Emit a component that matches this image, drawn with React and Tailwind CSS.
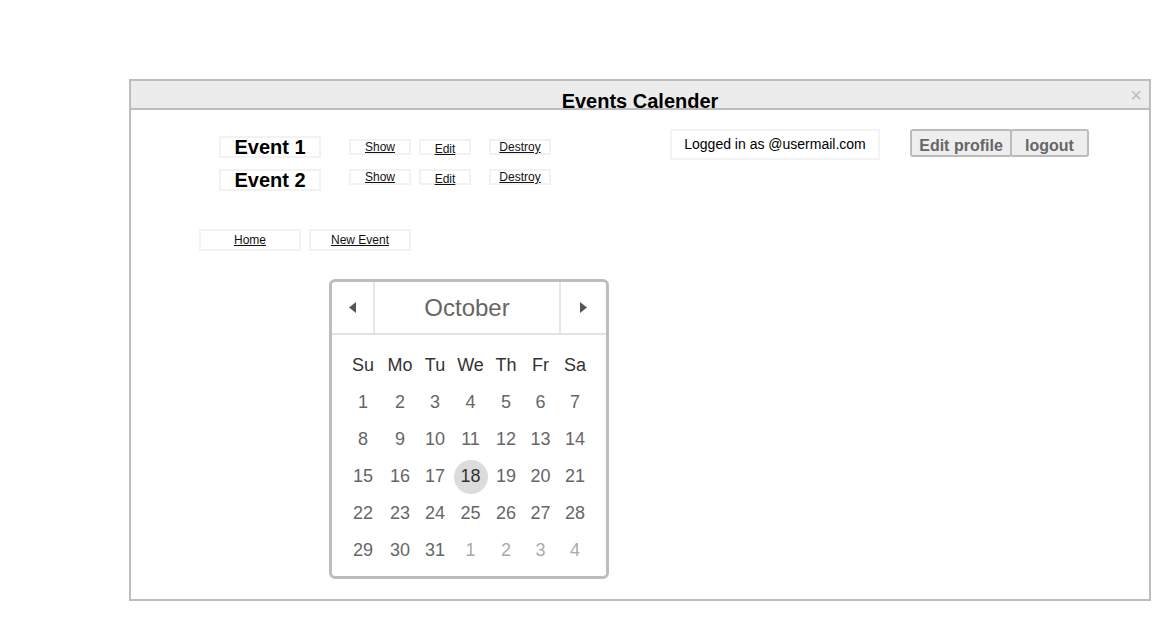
import React from "react";

const events = ["Event 1", "Event 2"];

const weeks = [
  [1, 2, 3, 4, 5, 6, 7],
  [8, 9, 10, 11, 12, 13, 14],
  [15, 16, 17, 18, 19, 20, 21],
  [22, 23, 24, 25, 26, 27, 28],
  [29, 30, 31, "1n", "2n", "3n", "4n"],
];

const labels = ["Su", "Mo", "Tu", "We", "Th", "Fr", "Sa"];

function LinkBox({ label, width, className = "" }) {
  return (
    <a
      href="#"
      className={`flex h-[16px] items-center justify-center border-2 border-[#f2f2f2] text-[12px] leading-[12px] text-[#111] underline ${width} ${className}`}
    >
      {label}
    </a>
  );
}

function Calendar() {
  return (
    <div className="w-[280px] rounded-[6px] border-[3px] border-[#bdbdbd] bg-white">
      <div className="flex h-[53px] border-b-2 border-[#e2e2e2]">
        <div className="flex w-[43px] items-center justify-center border-r-2 border-[#e6e6e6]">
          <svg width="7" height="11" viewBox="0 0 7 11">
            <polygon points="7,0 7,11 0,5.5" fill="#555" />
          </svg>
        </div>
        <div className="flex flex-1 items-center justify-center text-[24px] text-[#666]">
          October
        </div>
        <div className="flex w-[47px] items-center justify-center border-l-2 border-[#e6e6e6]">
          <svg width="7" height="11" viewBox="0 0 7 11">
            <polygon points="0,0 0,11 7,5.5" fill="#555" />
          </svg>
        </div>
      </div>
      <div className="grid grid-cols-[38px_36px_34px_37px_34px_35px_34px] grid-rows-[38px_37px_37px_37px_37px_37px] pb-[7px] pl-[12px] pt-[11px] text-[18px]">
        {labels.map((l) => (
          <div key={l} className="flex items-center justify-center text-[#333]">
            {l}
          </div>
        ))}
        {weeks.flat().map((d) => {
          const other = typeof d === "string";
          const selected = d === 18;
          return (
            <div key={d} className="flex items-center justify-center">
              {selected ? (
                <span className="flex h-[34px] w-[34px] items-center justify-center rounded-full bg-[#dcdcdc] text-[#333]">
                  {d}
                </span>
              ) : (
                <span className={other ? "text-[#aaa]" : "text-[#666]"}>
                  {other ? parseInt(d) : d}
                </span>
              )}
            </div>
          );
        })}
      </div>
    </div>
  );
}

export default function App() {
  return (
    <div className="min-h-[620px] bg-white pl-[129px] pt-[79px] font-['Liberation_Sans',Arial,sans-serif] text-black">
      <div className="h-[522px] w-[1022px] border-2 border-[#bdbdbd]">
        <div className="relative h-[29px] border-b-2 border-[#bdbdbd] bg-[#ececec]">
          <div className="h-[27px] pt-[10px] text-center text-[20px] font-bold leading-[20px]">
            Events Calender
          </div>
          <span className="absolute right-[7px] top-[4px] text-[20px] leading-[20px] text-[#bbb]">
            ×
          </span>
        </div>

        <div className="pl-[68px] pt-[19px]">
          <div className="flex items-start">
            <div className="ml-[20px] mt-[7px] flex flex-col gap-[11px]">
              {events.map((e, i) => (
                <div key={e} className="flex items-start">
                  <div className="flex h-[22px] w-[102px] items-center justify-center border-2 border-[#f2f2f2] text-[20px] font-bold leading-[20px]">
                    {e}
                  </div>
                  <LinkBox label="Show" width="w-[62px]" className={i === 0 ? "ml-[28px] mt-[3px]" : "ml-[28px]"} />
                  <LinkBox label="Edit" width="w-[52px]" className={i === 0 ? "ml-[8px] mt-[3px] pt-[3px]" : "ml-[8px] pt-[3px]"} />
                  <LinkBox label="Destroy" width="w-[62px]" className={i === 0 ? "ml-[18px] mt-[3px]" : "ml-[18px]"} />
                </div>
              ))}
            </div>

            <div className="ml-[119px] flex h-[31px] w-[210px] items-center justify-center border-2 border-[#f4f4f4] text-[14px]">
              Logged in as @usermail.com
            </div>

            <div className="ml-[30px] flex">
              <button className="h-[28px] w-[102px] rounded-[3px] border-2 border-[#bbb] bg-[#eee] pt-[3px] text-[16px] font-bold text-[#666]">
                Edit profile
              </button>
              <button className="-ml-[2px] h-[28px] w-[79px] rounded-[3px] border-2 border-[#bbb] bg-[#eee] pt-[3px] text-[16px] font-bold text-[#666]">
                logout
              </button>
            </div>
          </div>

          <div className="mt-[38px] flex gap-[8px]">
            <a href="#" className="flex h-[22px] w-[102px] items-center justify-center border-2 border-[#f2f2f2] text-[12px] text-[#111] underline">
              Home
            </a>
            <a href="#" className="flex h-[22px] w-[102px] items-center justify-center border-2 border-[#f2f2f2] text-[12px] text-[#111] underline">
              New Event
            </a>
          </div>

          <div className="ml-[130px] mt-[28px]">
            <Calendar />
          </div>
        </div>
      </div>
    </div>
  );
}
